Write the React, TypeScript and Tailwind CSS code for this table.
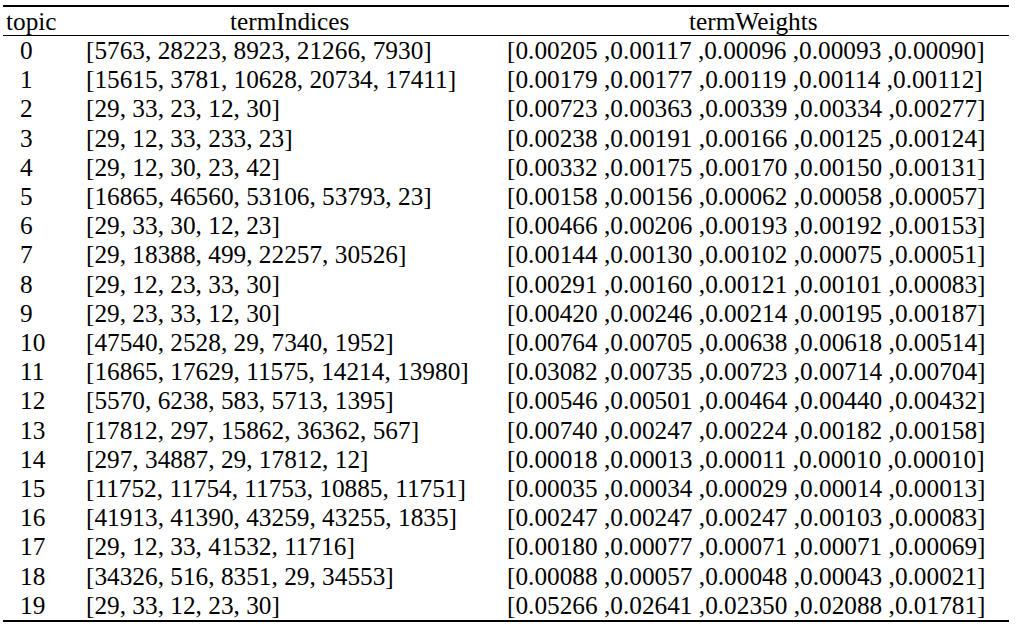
const rows: [string, string][] = [
  ["[5763, 28223, 8923, 21266, 7930]", "[0.00205 ,0.00117 ,0.00096 ,0.00093 ,0.00090]"],
  ["[15615, 3781, 10628, 20734, 17411]", "[0.00179 ,0.00177 ,0.00119 ,0.00114 ,0.00112]"],
  ["[29, 33, 23, 12, 30]", "[0.00723 ,0.00363 ,0.00339 ,0.00334 ,0.00277]"],
  ["[29, 12, 33, 233, 23]", "[0.00238 ,0.00191 ,0.00166 ,0.00125 ,0.00124]"],
  ["[29, 12, 30, 23, 42]", "[0.00332 ,0.00175 ,0.00170 ,0.00150 ,0.00131]"],
  ["[16865, 46560, 53106, 53793, 23]", "[0.00158 ,0.00156 ,0.00062 ,0.00058 ,0.00057]"],
  ["[29, 33, 30, 12, 23]", "[0.00466 ,0.00206 ,0.00193 ,0.00192 ,0.00153]"],
  ["[29, 18388, 499, 22257, 30526]", "[0.00144 ,0.00130 ,0.00102 ,0.00075 ,0.00051]"],
  ["[29, 12, 23, 33, 30]", "[0.00291 ,0.00160 ,0.00121 ,0.00101 ,0.00083]"],
  ["[29, 23, 33, 12, 30]", "[0.00420 ,0.00246 ,0.00214 ,0.00195 ,0.00187]"],
  ["[47540, 2528, 29, 7340, 1952]", "[0.00764 ,0.00705 ,0.00638 ,0.00618 ,0.00514]"],
  ["[16865, 17629, 11575, 14214, 13980]", "[0.03082 ,0.00735 ,0.00723 ,0.00714 ,0.00704]"],
  ["[5570, 6238, 583, 5713, 1395]", "[0.00546 ,0.00501 ,0.00464 ,0.00440 ,0.00432]"],
  ["[17812, 297, 15862, 36362, 567]", "[0.00740 ,0.00247 ,0.00224 ,0.00182 ,0.00158]"],
  ["[297, 34887, 29, 17812, 12]", "[0.00018 ,0.00013 ,0.00011 ,0.00010 ,0.00010]"],
  ["[11752, 11754, 11753, 10885, 11751]", "[0.00035 ,0.00034 ,0.00029 ,0.00014 ,0.00013]"],
  ["[41913, 41390, 43259, 43255, 1835]", "[0.00247 ,0.00247 ,0.00247 ,0.00103 ,0.00083]"],
  ["[29, 12, 33, 41532, 11716]", "[0.00180 ,0.00077 ,0.00071 ,0.00071 ,0.00069]"],
  ["[34326, 516, 8351, 29, 34553]", "[0.00088 ,0.00057 ,0.00048 ,0.00043 ,0.00021]"],
  ["[29, 33, 12, 23, 30]", "[0.05266 ,0.02641 ,0.02350 ,0.02088 ,0.01781]"],
];

export default function App() {
  return (
    <div className="min-h-screen w-[1018px] bg-white pt-[5px] pl-[3px] font-['Liberation_Serif',serif] text-[25.3px] text-black">
      <div className="w-[1006px] border-y-2 border-black">
        {/* header */}
        <div className="grid grid-cols-[83px_421px_502px] border-b border-black leading-[28px] whitespace-nowrap">
          <div className="pl-[3px]">topic</div>
          <div className="pl-[144px]">termIndices</div>
          <div className="pl-[182px]">termWeights</div>
        </div>

        {rows.map(([idx, w], i) => (
          <div key={i} className="grid grid-cols-[83px_421px_502px] whitespace-nowrap leading-[29.2px]">
            <div className="pl-[17px]">{i}</div>
            <div>{idx}</div>
            <div>{w}</div>
          </div>
        ))}
      </div>
    </div>
  );
}
